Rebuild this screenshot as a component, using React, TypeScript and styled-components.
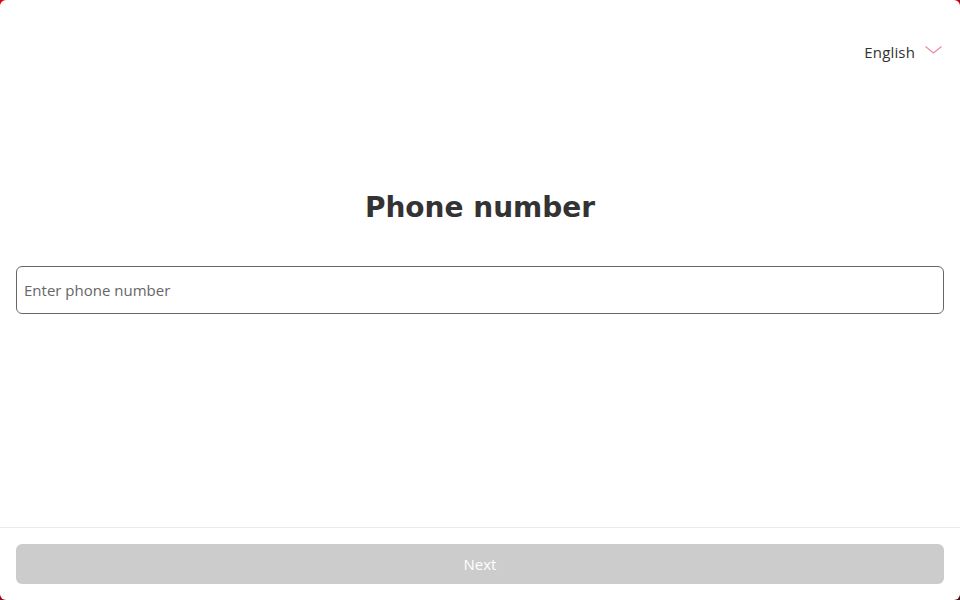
import styled, { createGlobalStyle } from "styled-components";

const GlobalStyle = createGlobalStyle`
  html, body {
    margin: 0;
    padding: 0;
    height: 100%;
  }
  body {
    background: linear-gradient(160deg, #e60000 0%, #b0001a 55%, #4a0d1a 100%);
  }
  #root {
    height: 100%;
  }
  * {
    box-sizing: border-box;
  }
`;

const ChevronDown = () => (
  <svg width="17" height="8" viewBox="0 0 17 8" fill="none">
    <path d="M0.5 0.5L8.5 7L16.5 0.5" stroke="#e0607e" strokeWidth="1.1" opacity="0.75" />
  </svg>
);

export default function App() {
  return (
    <>
      <GlobalStyle />
      <Page>
        <Header>
          <LangButton>
            English
            <ChevronDown />
          </LangButton>
        </Header>
        <Main>
          <Title>Phone number</Title>
          <PhoneInput placeholder="Enter phone number" />
        </Main>
        <Footer>
          <NextButton disabled>Next</NextButton>
        </Footer>
      </Page>
    </>
  );
}

const Page = styled.div`
  display: flex;
  flex-direction: column;
  height: 600px;
  background: #fff;
  border-radius: 6px;
  overflow: hidden;
  font-family: "Open Sans", "Noto Sans", sans-serif;
`;
const Header = styled.div`
  display: flex;
  justify-content: flex-end;
  padding: 42px 18px 0 16px;
`;
const LangButton = styled.button`
  display: flex;
  align-items: center;
  gap: 10px;
  border: 0;
  background: none;
  padding: 0;
  font-family: "Open Sans", "Noto Sans", sans-serif;
  font-size: 15px;
  letter-spacing: 0.15px;
  color: #333;
  cursor: pointer;
  svg {
    margin-top: -4px;
  }
`;
const Main = styled.div`
  flex: 1;
  display: flex;
  flex-direction: column;
  padding: 0 16px;
`;
const Title = styled.h1`
  margin: 124px 0 0;
  text-align: center;
  font-family: "DejaVu Sans", sans-serif;
  font-size: 28px;
  font-weight: 700;
  color: #333;
  line-height: 44px;
`;
const PhoneInput = styled.input`
  margin-top: 36px;
  width: 100%;
  height: 48px;
  border: 1px solid #666;
  border-radius: 6px;
  padding: 0 7px;
  font-family: "Open Sans", "Noto Sans", sans-serif;
  font-size: 15px;
  color: #333;
  outline: none;
  &::placeholder {
    color: #666;
  }
`;
const Footer = styled.div`
  border-top: 1px solid #ebebeb;
  padding: 16px;
`;
const NextButton = styled.button`
  width: 100%;
  height: 40px;
  border: 0;
  border-radius: 6px;
  background: #cccccc;
  color: #fff;
  font-family: "Open Sans", "Noto Sans", sans-serif;
  font-size: 15px;
`;
